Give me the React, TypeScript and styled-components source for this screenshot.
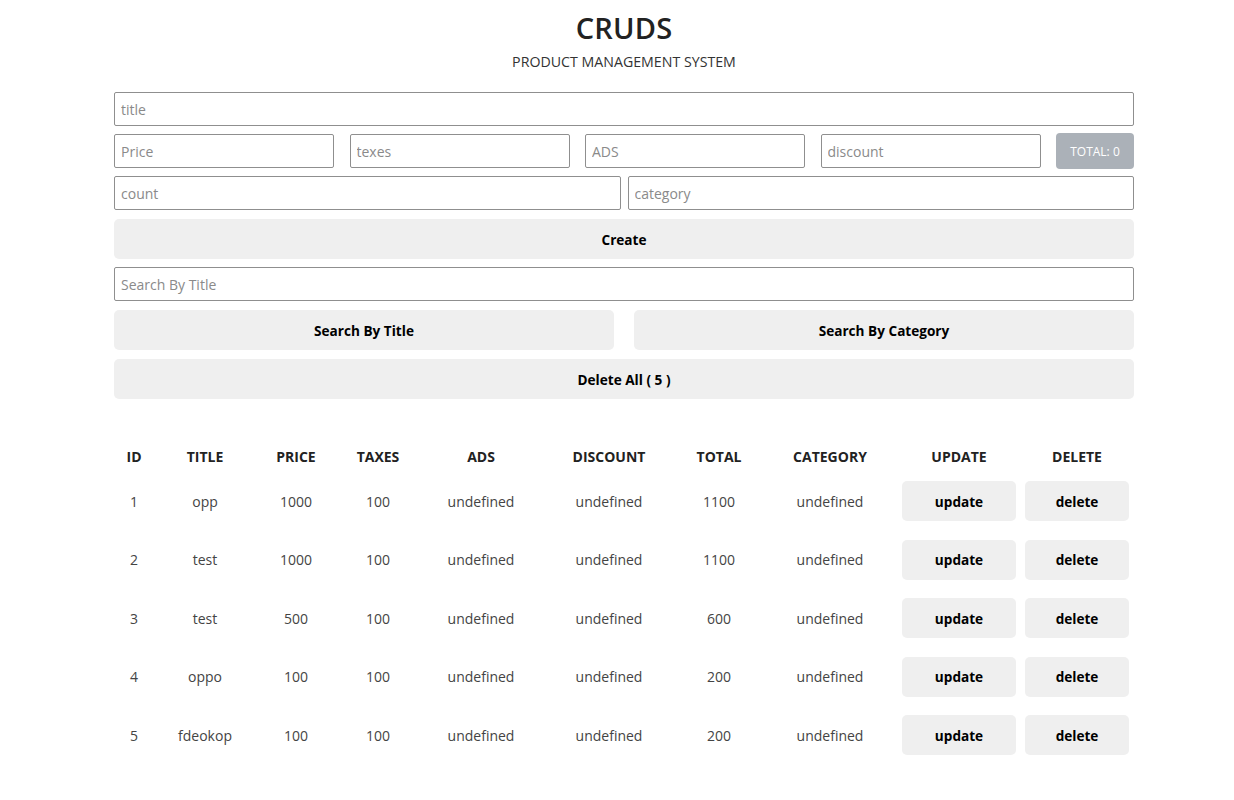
import React from "react";
import styled, { createGlobalStyle } from "styled-components";

const Global = createGlobalStyle`
  html, body { margin: 0; padding: 0; background: #ffffff; }
  body { font-family: "Open Sans", "Noto Sans", sans-serif; color: #222; }
  * { box-sizing: border-box; }
`;

const Page = styled.div`
  width: 1020px;
  margin: 0 0 0 114px;
  padding-top: 10px;
`;

const Header = styled.header`
  text-align: center;
`;

const Title = styled.h1`
  margin: 0;
  font-size: 29px;
  line-height: 36px;
  font-weight: 600;
  color: #222;
  letter-spacing: 0.2px;
`;

const Subtitle = styled.p`
  margin: 6px 0 0;
  font-size: 14.2px;
  line-height: 19px;
  font-weight: 400;
  color: #333;
`;

const Form = styled.div`
  margin-top: 21px;
  display: flex;
  flex-direction: column;
  gap: 8px;
`;

const Input = styled.input`
  display: block;
  width: 100%;
  height: 34px;
  padding: 0 6px;
  border: 1px solid #8f8f8f;
  border-radius: 2px;
  font-family: "Open Sans", "Noto Sans", sans-serif;
  font-size: 14px;
  color: #222;
  outline: none;
  &::placeholder { color: #8a8a8a; }
`;

const PriceRow = styled.div`
  display: grid;
  grid-template-columns: 220px 220px 220px 220px 78px;
  grid-template-rows: 34px;
  column-gap: 15.5px;
  align-items: center;
`;

const TwoCols = styled.div<{ $gap: number }>`
  display: grid;
  grid-template-columns: 1fr 1fr;
  column-gap: ${(p) => p.$gap}px;
`;

const Total = styled.small`
  display: flex;
  align-items: center;
  justify-content: center;
  height: 36px;
  border-radius: 4px;
  background: #abb1b8;
  color: #ffffff;
  font-size: 12px;
`;

const Button = styled.button`
  display: block;
  width: 100%;
  height: 40px;
  margin-top: 1px;
  border: none;
  border-radius: 5px;
  background: #efefef;
  color: #000;
  font-family: "Open Sans", "Noto Sans", sans-serif;
  font-size: 13.6px;
  font-weight: 700;
  cursor: pointer;
`;

const Table = styled.table`
  margin-top: 41px;
  width: 1020px;
  table-layout: fixed;
  border-collapse: collapse;
  text-align: center;
`;

const Th = styled.th`
  height: 32px;
  padding: 0;
  font-size: 14px;
  font-weight: 700;
  color: #222;
  text-transform: uppercase;
`;

const Td = styled.td<{ $pad?: number }>`
  height: 58.5px;
  padding: 0 ${(p) => p.$pad ?? 4}px;
  font-size: 14px;
  color: #444;
`;

const RowButton = styled(Button)`
  margin-top: 0;
`;

const cols = [40, 102, 80, 84, 122, 134, 86, 136, 122, 114];
const heads = ["id", "title", "price", "taxes", "ads", "discount", "total", "category", "update", "delete"];

const rows = [
  { id: 1, title: "opp", price: 1000, taxes: 100, total: 1100 },
  { id: 2, title: "test", price: 1000, taxes: 100, total: 1100 },
  { id: 3, title: "test", price: 500, taxes: 100, total: 600 },
  { id: 4, title: "oppo", price: 100, taxes: 100, total: 200 },
  { id: 5, title: "fdeokop", price: 100, taxes: 100, total: 200 },
];

export default function App() {
  return (
    <>
      <Global />
      <Page>
        <Header>
          <Title>CRUDS</Title>
          <Subtitle>PRODUCT MANAGEMENT SYSTEM</Subtitle>
        </Header>
        <Form>
          <Input placeholder="title" />
          <PriceRow>
            <Input placeholder="Price" />
            <Input placeholder="texes" />
            <Input placeholder="ADS" />
            <Input placeholder="discount" />
            <Total>TOTAL: 0</Total>
          </PriceRow>
          <TwoCols $gap={7}>
            <Input placeholder="count" />
            <Input placeholder="category" />
          </TwoCols>
          <Button>Create</Button>
          <Input placeholder="Search By Title" />
          <TwoCols $gap={20}>
            <Button>Search By Title</Button>
            <Button>Search By Category</Button>
          </TwoCols>
          <Button>Delete All ( 5 )</Button>
        </Form>
        <Table>
          <colgroup>
            {cols.map((w, i) => (
              <col key={i} style={{ width: w }} />
            ))}
          </colgroup>
          <thead>
            <tr>
              {heads.map((h) => (
                <Th key={h}>{h}</Th>
              ))}
            </tr>
          </thead>
          <tbody>
            {rows.map((r) => (
              <tr key={r.id}>
                <Td>{r.id}</Td>
                <Td>{r.title}</Td>
                <Td>{r.price}</Td>
                <Td>{r.taxes}</Td>
                <Td>undefined</Td>
                <Td>undefined</Td>
                <Td>{r.total}</Td>
                <Td>undefined</Td>
                <Td>
                  <RowButton>update</RowButton>
                </Td>
                <Td $pad={5}>
                  <RowButton>delete</RowButton>
                </Td>
              </tr>
            ))}
          </tbody>
        </Table>
      </Page>
    </>
  );
}
